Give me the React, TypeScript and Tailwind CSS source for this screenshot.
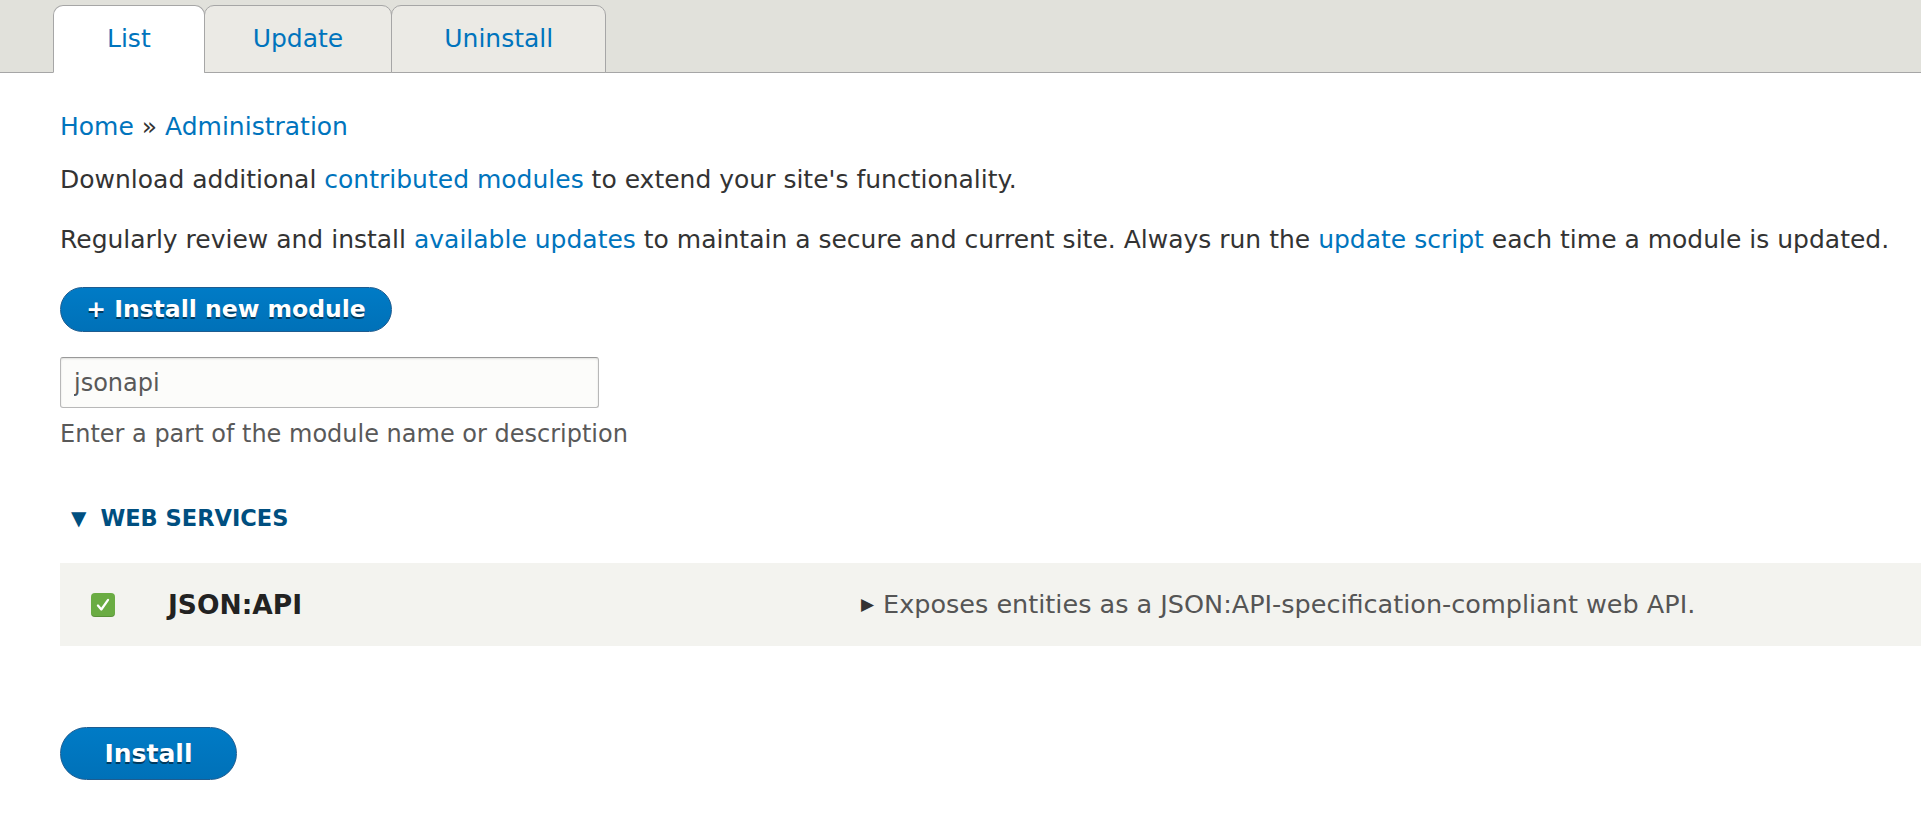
import { useState } from "react";

const LINK = "text-[#0074bd]";

function Tab({ label, active, pad }: { label: string; active?: boolean; pad: string }) {
  return (
    <a
      href="#"
      className={`-mb-px flex h-[68px] items-center rounded-t-[10px] border border-[#a6a6a6] text-[25px] ${pad} ${LINK} ${
        active ? "border-b-white bg-white" : "-ml-px border-b-[#a6a6a6] bg-[#ebeae5]"
      }`}
    >
      {label}
    </a>
  );
}

function BlueButton({ children, big }: { children: React.ReactNode; big?: boolean }) {
  return (
    <button
      className={`block whitespace-nowrap rounded-full border border-[#1e5c90] bg-gradient-to-b from-[#007bc6] to-[#0071b8] font-bold text-white [text-shadow:0_2px_0_rgba(0,0,0,0.5)] ${
        big ? "h-[53px] w-[177px] text-[25px]" : "h-[45px] w-[332px] text-[23.5px]"
      }`}
    >
      {children}
    </button>
  );
}

export default function App() {
  const [filter, setFilter] = useState("jsonapi");
  const [checked, setChecked] = useState(true);

  return (
    <div className="min-h-[815px] bg-white text-[25px] text-[#333] [font-family:'DejaVu_Sans',sans-serif]">
      {/* Primary tabs */}
      <div className="flex h-[73px] items-end border-b border-[#a6a6a6] bg-[#e1e1db] pl-[53px]">
        <Tab label="List" active pad="px-[53px]" />
        <Tab label="Update" pad="px-[48px]" />
        <Tab label="Uninstall" pad="px-[52px]" />
      </div>

      <div className="px-[60px]">
        <div className="mt-[39px] leading-[30px]">
          <a href="#" className={LINK}>Home</a> » <a href="#" className={LINK}>Administration</a>
        </div>

        <p className="mt-[23px] leading-[30px]">
          Download additional <a href="#" className={LINK}>contributed modules</a> to extend your site's functionality.
        </p>
        <p className="mt-[30px] whitespace-nowrap leading-[30px]">
          Regularly review and install <a href="#" className={LINK}>available updates</a> to maintain a secure and current
          site. Always run the <a href="#" className={LINK}>update script</a> each time a module is updated.
        </p>

        <div className="mt-[32px]">
          <BlueButton>+ Install new module</BlueButton>
        </div>

        <input
          value={filter}
          onChange={(e) => setFilter(e.target.value)}
          className="mt-[25px] block h-[51px] w-[539px] rounded-[3px] border border-[#b8b8b8] border-t-[#999] bg-[#fcfcfa] px-[13px] text-[24px] text-[#595959] shadow-[inset_0_1px_2px_rgba(0,0,0,0.12)] outline-none"
        />
        <div className="mt-[11px] text-[24px] leading-[30px] text-[#595959]">Enter a part of the module name or description</div>

        <div className="mt-[54px] flex items-center leading-[30px]">
          <span className="ml-[11px] text-[20px] text-[#004f80]">▼</span>
          <span className="ml-[14px] text-[22.5px] font-bold uppercase text-[#004f80]">Web services</span>
        </div>

        <div className="-mr-[60px] mt-[30px] flex h-[83px] items-center bg-[#f3f3ef]">
          <button
            onClick={() => setChecked(!checked)}
            className="ml-[31px] flex h-[24px] w-[24px] items-center justify-center rounded-[4px] bg-[#6aac43] shadow-[inset_0_-1px_0_rgba(0,0,0,0.15)]"
          >
            {checked && (
              <svg width="18" height="18" viewBox="0 0 16 16" fill="none">
                <path d="M3.5 8.5l3 3.5L12.5 3.5" stroke="white" strokeWidth="2" strokeLinecap="round" strokeLinejoin="round" />
              </svg>
            )}
          </button>
          <span className="ml-[53px] w-[682px] text-[26.5px] font-bold text-[#222]">JSON:API</span>
          <span className="ml-[11px] text-[17px] text-[#333]">▶</span>
          <span className="ml-[9px] text-[25.5px] text-[#555]">Exposes entities as a JSON:API-specification-compliant web API.</span>
        </div>

        <div className="mt-[81px]">
          <BlueButton big>Install</BlueButton>
        </div>
      </div>
    </div>
  );
}
